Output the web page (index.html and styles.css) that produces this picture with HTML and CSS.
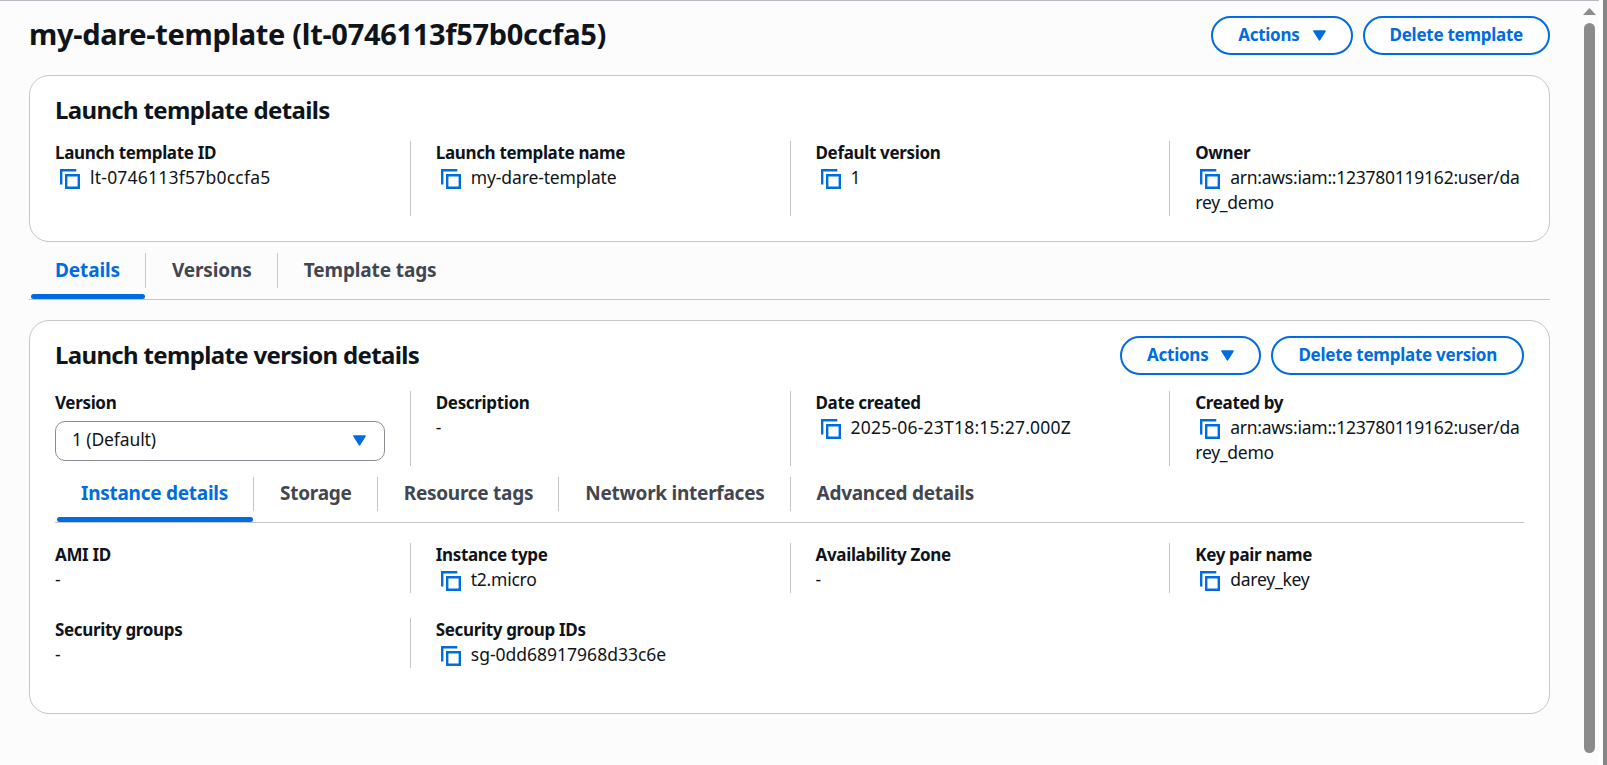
FILE: index.html
```html
<!DOCTYPE html>
<html lang="en">
<head>
<meta charset="utf-8">
<title>Launch template</title>
<link rel="stylesheet" href="styles.css">
</head>
<body>
<svg class="defs" aria-hidden="true">
  <symbol id="copy" viewBox="0 0 20 20"><path d="M1.2 15.5V1.2H16.3M6.2 6.2H18.8V18.8H6.2Z" fill="none" stroke="currentColor" stroke-width="2.4"/></symbol>
  <symbol id="caret" viewBox="0 0 13 11"><path d="M1 1H12L6.5 9.8Z" fill="currentColor" stroke="currentColor" stroke-width="1.6" stroke-linejoin="round"/></symbol>
</svg>
<div class="window">
  <main class="page">
    <header class="page-header">
      <h1>my-dare-template (lt-0746113f57b0ccfa5)</h1>
      <div class="actions">
        <button class="btn"><span>Actions</span><svg class="caret"><use href="#caret"/></svg></button>
        <button class="btn"><span>Delete template</span></button>
      </div>
    </header>

    <section class="card card-summary">
      <h2>Launch template details</h2>
      <div class="columns tall">
        <div class="field"><div class="label">Launch template ID</div><div class="value"><svg class="copy"><use href="#copy"/></svg><span class="wide">lt-0746113f57b0ccfa5</span></div></div>
        <div class="field"><div class="label">Launch template name</div><div class="value"><svg class="copy"><use href="#copy"/></svg><span class="slim">my-dare-template</span></div></div>
        <div class="field"><div class="label">Default version</div><div class="value"><svg class="copy"><use href="#copy"/></svg><span>1</span></div></div>
        <div class="field"><div class="label">Owner</div><div class="value"><svg class="copy"><use href="#copy"/></svg><span class="narrow">arn:aws:iam::123780119162:user/da<br>rey_demo</span></div></div>
      </div>
    </section>

    <nav class="tabs">
      <a class="tab active"><span>Details</span></a>
      <a class="tab"><span>Versions</span></a>
      <a class="tab"><span>Template tags</span></a>
    </nav>

    <section class="card card-version">
      <div class="card-header">
        <h2>Launch template version details</h2>
        <div class="actions">
          <button class="btn"><span>Actions</span><svg class="caret"><use href="#caret"/></svg></button>
          <button class="btn"><span>Delete template version</span></button>
        </div>
      </div>
      <div class="columns tall">
        <div class="field"><div class="label">Version</div><div class="select"><span class="slim">1 (Default)</span><svg class="caret"><use href="#caret"/></svg></div></div>
        <div class="field"><div class="label">Description</div><div class="value">-</div></div>
        <div class="field"><div class="label">Date created</div><div class="value"><svg class="copy"><use href="#copy"/></svg><span class="wide">2025-06-23T18:15:27.000Z</span></div></div>
        <div class="field"><div class="label">Created by</div><div class="value"><svg class="copy"><use href="#copy"/></svg><span class="narrow">arn:aws:iam::123780119162:user/da<br>rey_demo</span></div></div>
      </div>
      <nav class="tabs tabs-inner">
        <a class="tab active"><span>Instance details</span></a>
        <a class="tab"><span>Storage</span></a>
        <a class="tab"><span>Resource tags</span></a>
        <a class="tab"><span>Network interfaces</span></a>
        <a class="tab"><span>Advanced details</span></a>
      </nav>
      <div class="columns rows">
        <div class="field"><div class="label">AMI ID</div><div class="value">-</div></div>
        <div class="field"><div class="label">Instance type</div><div class="value"><svg class="copy"><use href="#copy"/></svg><span class="narrow">t2.micro</span></div></div>
        <div class="field"><div class="label">Availability Zone</div><div class="value">-</div></div>
        <div class="field"><div class="label">Key pair name</div><div class="value"><svg class="copy"><use href="#copy"/></svg><span class="narrow">darey_key</span></div></div>
        <div class="field"><div class="label">Security groups</div><div class="value">-</div></div>
        <div class="field"><div class="label">Security group IDs</div><div class="value"><svg class="copy"><use href="#copy"/></svg><span>sg-0dd68917968d33c6e</span></div></div>
      </div>
    </section>
  </main>
  <div class="scrollbar"><div class="arrow"></div><div class="thumb"></div></div>
</div>
</body>
</html>
```
FILE: styles.css
```css
* { box-sizing: border-box; }
body {
  margin: 0;
  background: #fcfcfd;
  color: #0f141a;
  font: 17.5px/25px "Noto Sans", "Open Sans", sans-serif;
}
.defs { display: none; }
h1, h2 { margin: 0; font-weight: 700; }
h1 { font-size: 29px; line-height: 36px; letter-spacing: -0.32px; }
h2 { font-size: 24px; line-height: 30px; letter-spacing: -0.66px; }

.window {
  display: flex;
  width: 1607px;
  height: 765px;
  overflow: hidden;
  border-right: 4px solid #868686;
}
.page { flex: 1; padding: 15px 32px 0 29px; border-top: 1px solid #b9b9c1; }

.page-header, .card-header { display: flex; justify-content: space-between; }
.actions { display: flex; gap: 10px; }
.btn {
  display: flex;
  align-items: center;
  height: 39px;
  padding: 0 25px 3px;
  border: 2px solid #006ce0;
  border-radius: 20px;
  background: #fff;
  color: #006ce0;
  font: 700 17px/25px "Noto Sans", "Open Sans", sans-serif;
  letter-spacing: -0.26px;
}
.caret { width: 13px; height: 11px; color: #006ce0; }
.btn .caret { margin: 2px 0 0 13px; }

.card { background: #fff; border: 1px solid #c6c6cd; border-radius: 20px; padding: 0 25px; }
.card-summary { height: 167px; margin-top: 20px; padding-top: 19px; }
.card-summary .columns { margin-top: 16px; }
.card-version { height: 394px; margin-top: 20px; padding-top: 15px; }
.card-header h2 { padding-top: 4px; }
.card-version .columns { margin-top: 16px; }

.columns { display: grid; grid-template-columns: repeat(4, minmax(0, 1fr)); column-gap: 50px; }
.field { min-height: 50px; white-space: nowrap; }
.tall .field { min-height: 75px; }
.field:not(:nth-child(4n + 1)) { border-left: 1px solid #c6c6cd; margin-left: -25px; padding-left: 25px; }
.label { padding-bottom: 1px; font-size: 17px; line-height: 23px; font-weight: 700; letter-spacing: -0.34px; }
.copy { width: 20px; height: 20px; margin: 0 10px 0 5px; vertical-align: -5px; color: #006ce0; }
.wide { letter-spacing: 0.22px; }
.slim { letter-spacing: -0.12px; }
.narrow { letter-spacing: -0.25px; }
.select {
  display: flex;
  align-items: center;
  justify-content: space-between;
  height: 40px;
  margin-top: 6px;
  padding: 0 18px 3px 16px;
  border: 1px solid #8c8c94;
  border-radius: 10px;
}
.select .caret { margin-top: 2px; }

.tabs { display: flex; border-bottom: 1px solid #c6c6cd; height: 58px; padding-top: 11px; }
.tab {
  position: relative;
  height: 35px;
  padding: 0 25px 0 26px;
  border-right: 1px solid #c6c6cd;
  color: #424650;
  font-size: 19px;
  font-weight: 700;
  line-height: 34px;
  letter-spacing: -0.12px;
}
.tab:last-child { border-right: 0; }
.tab.active { color: #006ce0; }
.tab.active::after {
  content: "";
  position: absolute;
  left: 2px;
  right: 0;
  top: 41px;
  height: 5px;
  border-radius: 5px;
  background: #006ce0;
}
.tabs-inner { height: 57px; }
.tabs-inner .tab { height: 34px; line-height: 32px; letter-spacing: -0.26px; }
.tabs-inner .tab.active::after { top: 40px; }
.card-version .rows { margin-top: 20px; row-gap: 25px; }

.scrollbar {
  width: 21px;
  padding: 8px 7px 0 1px;
  background:
    linear-gradient(#b9b9c1, #b9b9c1) 0 0 / 17px 1px no-repeat,
    linear-gradient(90deg, #fcfcfd 17px, #fff 17px);
}
.arrow { width: 13px; height: 7px; background: #8b8b8b; clip-path: polygon(50% 0, 100% 100%, 0 100%); }
.thumb { width: 11px; height: 730px; margin: 8px 0 0 1px; border-radius: 6px; background: #8b8b8b; }
```
